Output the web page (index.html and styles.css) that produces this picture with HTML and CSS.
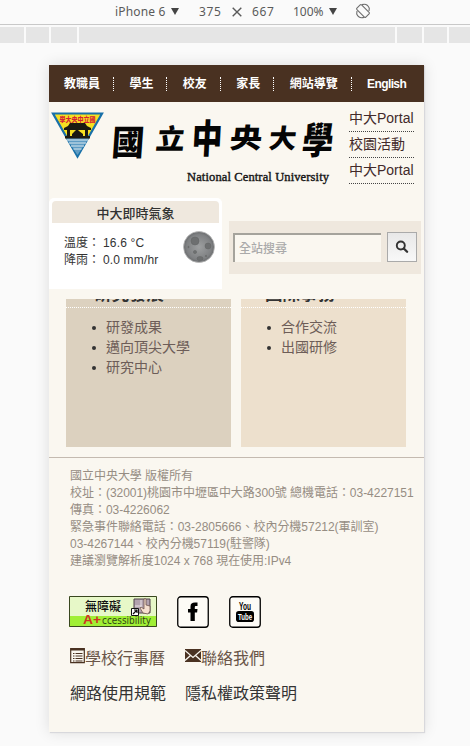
FILE: index.html
```html
<!DOCTYPE html>
<html lang="zh-Hant">
<head>
<meta charset="utf-8">
<title>國立中央大學</title>
<link rel="stylesheet" href="styles.css">
</head>
<body>
<header class="toolbar">
  <span class="device">iPhone 6</span><i class="caret"></i>
  <span class="dim-w">375</span>
  <svg class="times" width="10" height="10" viewBox="0 0 10 10"><path d="M.7.7l8.6 8.6M9.3.7L.7 9.3" stroke="#5a5a5a" stroke-width="1.4"/></svg>
  <span class="dim-h">667</span>
  <span class="scale">100%</span><i class="caret"></i>
  <svg class="rotate" width="16" height="16" viewBox="0 0 16 16" fill="none" stroke="#6e6e6e" stroke-width="1.1"><rect x="4.7" y="1.7" width="6.6" height="12.6" rx="1" transform="rotate(-45 8 8)"/><path d="M7 1.6C10 .7 13 2 14.3 5.200L14 8M9 14.400C6 15.300 3 14 1.700 11L2 8"/></svg>
</header>
<div class="ruler"><i></i><i></i><i></i><i></i><i></i><i></i><i></i></div>

<main class="phone">
  <nav class="topnav">
    <a>教職員</a><a>學生</a><a>校友</a><a>家長</a><a>網站導覽</a><a>English</a>
  </nav>

  <section class="brand">
    <svg class="logo" width="290" height="90" viewBox="0 0 290 90">
      <path d="M4 7.500H53L28.500 50.500Z" fill="#f5df22" stroke="#1870a8" stroke-width="2.200"/>
      <path d="M17 32H40L28.500 49Z" fill="#5f9cc4"/>
      <path d="M18 34h21M20 37h17M22 40h13M24.500 43h8" stroke="#dbe9ef" stroke-width="1"/>
      <path d="M15 22l4-2 2-3h15l2 3 4 2v2H15zM18 24h3v8h-3zM36 24h3v8h-3zM23 28l3-3 2-2 2 2 4 3v4H23zM16 30h25v2.500H16z" fill="#1b1a12"/>
      <text class="crest" x="10.500" y="16" textLength="36" lengthAdjust="spacingAndGlyphs">學大央中立國</text>
      <g class="brush">
        <text transform="translate(62 49) skewX(-4) scale(1.350 1.450)">國</text>
        <text transform="translate(106 43) skewX(-7) scale(1.200 1.150)">立</text>
        <text transform="translate(142 47) skewX(-3) scale(1.280 1.650)">中</text>
        <text transform="translate(180 42) skewX(-6) scale(1.350 1.150)">央</text>
        <text transform="translate(219 42) skewX(-6) scale(1.150 1.100)">大</text>
        <text transform="translate(252 48) skewX(-6) scale(1.300 1.550)">學</text>
      </g>
      <text class="english" x="138" y="75" textLength="142">National Central University</text>
    </svg>
    <div class="quick"><a>中大Portal</a><a>校園活動</a><a>中大Portal</a></div>
  </section>

  <section class="tools">
    <div class="weather">
      <h2>中大即時氣象</h2>
      <div class="reading">
        <dl><dt>溫度：</dt><dd>16.6 °C</dd><dt>降雨：</dt><dd>0.0 mm/hr</dd></dl>
        <svg width="34" height="34" viewBox="0 0 34 34"><defs><radialGradient id="moon"><stop offset="0" stop-color="#9ea0a1"/><stop offset=".8" stop-color="#7f8183"/><stop offset="1" stop-color="#696b6d"/></radialGradient></defs><circle cx="17" cy="17" r="15.500" fill="url(#moon)" stroke="#bbb" stroke-width=".8"/><g fill="#6d6f70" stroke="#626465" stroke-width=".5"><circle cx="13" cy="11" r="4"/><circle cx="26" cy="16" r="3"/><circle cx="13" cy="22" r="1.600"/><circle cx="6.500" cy="17" r=".7"/><ellipse cx="18" cy="28.500" rx="3" ry="2"/><circle cx="24" cy="26" r=".7"/></g></svg>
      </div>
    </div>
    <form class="search">
      <input type="text" placeholder="全站搜尋">
      <button type="button"><svg width="14" height="14" viewBox="0 0 14 14"><circle cx="5.800" cy="5.500" r="4" fill="none" stroke="#333" stroke-width="1.900"/><path d="M8.800 8.500l3.300 3.300" stroke="#333" stroke-width="2.300" stroke-linecap="round"/></svg></button>
    </form>
  </section>

  <section class="panels">
    <article class="panel research"><h3>研究發展</h3><ul><li>研發成果</li><li>邁向頂尖大學</li><li>研究中心</li></ul></article>
    <article class="panel global"><h3>國際事務</h3><ul><li>合作交流</li><li>出國研修</li></ul></article>
  </section>

  <footer class="footer">
    <address>國立中央大學 版權所有<br>校址：(32001)桃園市中壢區中大路300號 總機電話：03-4227151<br>傳真：03-4226062<br>緊急事件聯絡電話：03-2805666、校內分機57212(軍訓室)<br>03-4267144、校內分機57119(駐警隊)<br>建議瀏覽解析度1024 x 768 現在使用:IPv4</address>
    <div class="badges">
      <svg width="88" height="31" viewBox="0 0 88 31">
        <path fill="#e7f8c8" d="M0 0h88v31H0z"/><path fill="#a0ef35" d="M0 20h88v11H0z"/><path d="M.5.500h87v30H.5z" fill="none" stroke="#39471f"/>
        <path d="M65 3h16v14H65z" fill="#b2a2ae" stroke="#51424c"/><path d="M72 4v10M66 10h7" stroke="#e9e1e5"/>
        <path d="M74 17l-3-5 1-1 3 2V3q1.500-1 2 0v6l4 1v5l-2 3z" fill="#f5dfcf" stroke="#64473c" stroke-width=".7"/>
        <path d="M62.500 12.500h7v7h-7z" fill="#fff" stroke="#111"/><path d="M64 18l4-4M65 14h3v3" fill="none" stroke="#111" stroke-width="1.200"/>
        <text class="a-zh" x="16" y="14.500" textLength="36">無障礙</text>
        <text class="a-plus" x="14" y="28" textLength="18" lengthAdjust="spacingAndGlyphs">A+</text>
        <text class="a-en" x="33" y="28" textLength="49" lengthAdjust="spacingAndGlyphs">ccessibility</text>
      </svg>
      <svg width="32" height="32" viewBox="0 0 32 32"><rect x=".75" y=".75" width="30.500" height="30.500" rx="3" fill="#fdfbf6" stroke="#000" stroke-width="1.300"/><path d="M13.500 25V16.500H11V13h2.500v-2.500C13.500 7.500 15 6.500 18 6.500h2.500V10h-1.400c-1 0-1.300.4-1.300 1.300V13h2.700l-.4 3.500h-2.300V25z"/></svg>
      <svg width="32" height="32" viewBox="0 0 32 32"><rect x=".75" y=".75" width="30.500" height="30.500" rx="3" fill="#fdfbf6" stroke="#000" stroke-width="1.300"/><rect x="7" y="15" width="18" height="11" rx="2.800"/><text class="yt" x="10" y="13.500" textLength="12" lengthAdjust="spacingAndGlyphs">You</text><text class="yt tube" x="9" y="24" textLength="14" lengthAdjust="spacingAndGlyphs">Tube</text></svg>
    </div>
    <div class="links">
      <a class="brown"><svg width="15" height="16" viewBox="0 0 15 16"><path d="M.7.700h13.600v14H.7z" fill="none" stroke="#4a3222" stroke-width="1.200"/><path d="M.5 1.500h14" stroke="#4a3222" stroke-width="2"/><path d="M3 5.500h1.500M3 8h1.500M3 10.500h1.500M3 13h1.500M5.500 5.500h7M5.500 8h7M5.500 10.500h7M5.500 13h7" stroke="#4a3222" stroke-width="1.100"/></svg>學校行事曆</a>
      <a class="brown"><svg width="16" height="16" viewBox="0 0 16 16"><path d="M0 1h16v13H0z" fill="#4a3222"/><path d="M0 2.500l8 7 8-7M0 12.500l5.500-5M16 12.500l-5.500-5" fill="none" stroke="#faf7f0" stroke-width="1.300"/></svg>聯絡我們</a>
      <a>網路使用規範</a><a>隱私權政策聲明</a>
    </div>
  </footer>
</main>
</body>
</html>
```
FILE: styles.css
```css
* { box-sizing: border-box; }
body {
  margin: 0;
  height: 746px;
  overflow: hidden;
  background: #fafafa;
  font-family: "Liberation Sans", "Noto Sans CJK TC", sans-serif;
  color: #333;
}
h2, h3, ul, dl, dd { margin: 0; padding: 0; }
svg { display: block; flex: none; }

.toolbar {
  height: 25px;
  display: flex;
  align-items: center;
  padding-left: 115px;
  border-bottom: 1px solid #c8c8c8;
  font: 12px "Noto Sans", sans-serif;
  color: #5a5a5a;
  white-space: nowrap;
}
.toolbar span { flex: none; margin-top: -1px; }
.toolbar .device { width: 56px; letter-spacing: .15px; }
.caret { flex: none; margin-top: -1px; border: 4px solid transparent; border-top: 7px solid #444; border-bottom: 0; }
.toolbar .dim-w { width: 33px; margin-left: 20px; letter-spacing: .6px; }
.toolbar .dim-h { width: 41px; margin-left: 10px; letter-spacing: .6px; }
.toolbar .scale { width: 36px; }
.rotate { margin: -2px 0 0 18px; }

.ruler {
  height: 16px;
  margin-top: 2px;
  display: grid;
  grid-template-columns: 24px 23px 26px 316px 25px 23px 1fr;
  column-gap: 2px;
}
.ruler i { background: #e5e5e5; }

.phone {
  width: 375px;
  height: 667px;
  margin: 22px 0 0 49px;
  display: flex;
  flex-direction: column;
  background: #faf7f0;
  box-shadow: 1px 1px 1px #d8d8dc, 0 0 14px rgba(0, 0, 0, .12);
}
.topnav {
  flex: none;
  height: 37px;
  padding-left: 15px;
  display: flex;
  align-items: center;
  background: #493121;
  color: #fff;
  font-size: 12px;
  font-weight: 700;
}
.topnav a { line-height: 14px; padding-right: 13px; margin-right: 15.4px; border-right: 1px dotted #fff; white-space: nowrap; }
.topnav a:last-child { border: 0; margin: 0; padding: 0; font-size: 12px; letter-spacing: -.6px; }

.brand { flex: none; height: 96px; display: flex; }
.logo { margin-top: 4px; }
.crest { font: 900 6.5px "Noto Sans CJK TC", sans-serif; fill: #d52234; }
.brush { font: 900 24px "Noto Sans CJK TC", sans-serif; fill: #050505; }
.english { font: 12.5px "Liberation Serif", serif; fill: #151515; stroke: #151515; stroke-width: .4px; }
.quick { width: 65px; margin: 4px 0 0 10px; }
.quick a { display: block; height: 26px; line-height: 25px; border-bottom: 1px dotted #444; font-size: 14px; color: #422a2a; white-space: nowrap; }

.tools { flex: none; height: 101px; display: flex; align-items: flex-start; }
.weather { width: 173px; height: 91px; padding: 3px; background: #fff; border-radius: 5px 5px 0 0; }
.weather h2 { height: 22px; line-height: 25px; background: #efe8de; border-radius: 4px 4px 0 0; text-align: center; font-size: 13px; font-weight: 500; }
.reading { display: flex; padding-left: 12px; }
.reading dl { width: 118px; margin-top: 12px; display: grid; grid-template-columns: 39px 1fr; font-size: 12px; line-height: 17px; white-space: nowrap; }
.reading dd { letter-spacing: .15px; }
.reading svg { margin-top: 7px; }
.search { width: 192px; height: 53px; margin: 23px 0 0 7px; padding: 11px 4px; display: flex; gap: 6px; background: #efe8de; }
.search input { width: 148px; height: 29px; margin-top: 1px; padding: 0 4px 3px; border: 0 solid #a5a39c; border-top-width: 2px; border-left-width: 2px; background: #faf7f0; font: 500 12px "Noto Sans CJK TC", sans-serif; }
.search input::placeholder { color: #aaa; opacity: 1; }
.search button { width: 30px; height: 30px; padding: 0; border: 1px solid #aaa; background: linear-gradient(#e8e8e8, #f8f8f8); display: grid; place-items: center; }

.panels { flex: none; height: 148px; padding-left: 17px; display: flex; gap: 10px; }
.panel { width: 165px; overflow: hidden; }
.research { background: #dcd1bf; }
.global { background: #ede0cd; }
.panel h3 { height: 26px; margin-top: -17px; padding-left: 28px; line-height: 25px; border-bottom: 1px dotted #fff; font-size: 17.5px; font-weight: 700; }
.global h3 { padding-left: 24px; }
.panel ul { padding: 9px 0 0 40px; font-size: 14px; line-height: 20px; }
.panel li { list-style: none; display: flex; align-items: center; height: 20px; color: #6d5d58; white-space: nowrap; }
.panel li::before { content: ""; width: 4px; height: 4px; margin: 2px 10px 0 -14px; border-radius: 50%; background: #333; }

.footer { flex: 1; margin-top: 10px; border-top: 1px solid #c4bab0; padding: 10px 0 0 21px; }
.footer address { font-style: normal; font-size: 12px; line-height: 17px; letter-spacing: -.03px; color: #968d83; white-space: nowrap; }
.badges { display: flex; gap: 20px; margin: 26px 0 0 -1px; }
.a-zh { font: 500 12px "Noto Sans CJK TC", sans-serif; fill: #111; }
.a-plus { font: 700 13px "Liberation Sans", sans-serif; fill: #cf3522; }
.a-en { font: 10px "DejaVu Sans", sans-serif; fill: #304516; }
.yt { font: 700 10px "Liberation Sans", sans-serif; fill: #000; }
.tube { fill: #fff; font-size: 9px; }
.links { margin-top: 14px; display: grid; grid-template-columns: 115px 1fr; font-size: 16px; white-space: nowrap; }
.links a { height: 35px; line-height: 34px; display: flex; }
.links svg { margin-top: 6px; }
.links .brown { color: #6a5649; }
```
